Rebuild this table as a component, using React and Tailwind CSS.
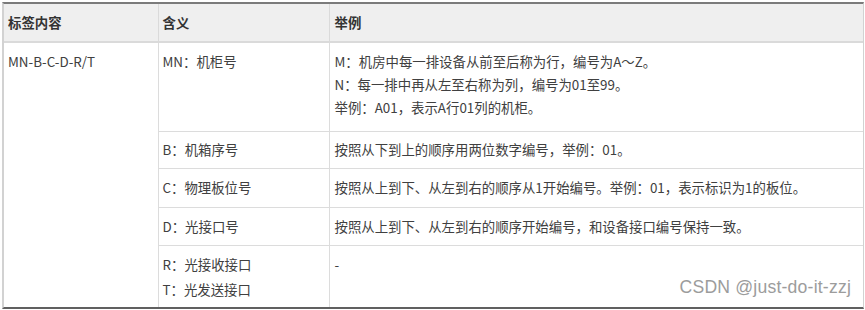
import React from 'react';

const rows = [
  { meaning: ['B：机箱序号'], example: ['按照从下到上的顺序用两位数字编号，举例：01。'], h: 'h-[37px]' },
  { meaning: ['C：物理板位号'], example: ['按照从上到下、从左到右的顺序从1开始编号。举例：01，表示标识为1的板位。'], h: 'h-[39px]' },
  { meaning: ['D：光接口号'], example: ['按照从上到下、从左到右的顺序开始编号，和设备接口编号保持一致。'], h: 'h-[38px]' },
];

export default function App() {
  return (
    <div className="relative w-[865px] h-[310px] bg-white pt-[2px] pl-[2px] pr-[1px] font-['Noto_Sans_CJK_SC','Noto_Sans',sans-serif] text-[13.4px] text-[#404040]">
      <div className="border-t-2 border-b-2 border-l-2 border-r border-t-[#7b7b7b] border-b-[#606060] border-l-[#d2d2d2] border-r-[#d2d2d2] h-[307px]">
        <table className="w-full table-fixed border-collapse">
          <colgroup>
            <col className="w-[154px]" />
            <col className="w-[171px]" />
            <col />
          </colgroup>
          <thead>
            <tr className="h-[38px] bg-[#efefef] border-b-2 border-[#dadada]">
              <th className="text-left font-bold text-[#333] pl-[4px] border-r border-[#dadada]">标签内容</th>
              <th className="text-left font-bold text-[#333] pl-[4px] border-r border-[#dadada]">含义</th>
              <th className="text-left font-bold text-[#333] pl-[5px]">举例</th>
            </tr>
          </thead>
          <tbody className="leading-[23px]">
            <tr className="h-[89px] border-b border-[#dcdcdc]">
              <td rowSpan={5} className="align-top pl-[4px] pt-[7px] border-r border-[#dcdcdc]">MN-B-C-D-R/T</td>
              <td className="align-top pl-[4px] pt-[7px] border-r border-[#dcdcdc]">MN：机柜号</td>
              <td className="align-top pl-[5px] pt-[7px]">
                <div>M：机房中每一排设备从前至后称为行，编号为A～Z。</div>
                <div>N：每一排中再从左至右称为列，编号为01至99。</div>
                <div>举例：A01，表示A行01列的机柜。</div>
              </td>
            </tr>
            {rows.map((r) => (
              <tr key={r.meaning[0]} className={`${r.h} border-b border-[#dcdcdc]`}>
                <td className="align-middle pl-[4px] border-r border-[#dcdcdc]">{r.meaning[0]}</td>
                <td className="align-middle pl-[5px]">{r.example[0]}</td>
              </tr>
            ))}
            <tr className="h-[62px]">
              <td className="align-top pl-[4px] pt-[6px] leading-[25px] border-r border-[#dcdcdc]">
                <div>R：光接收接口</div>
                <div>T：光发送接口</div>
              </td>
              <td className="align-top pl-[5px] pt-[6px] leading-[25px]">-</td>
            </tr>
          </tbody>
        </table>
      </div>
      {/* watermark */}
      <div className="absolute right-[14px] bottom-[10px] text-[17.6px] text-[#9c9c9c] font-['Liberation_Sans',sans-serif] tracking-[0.2px]">
        CSDN @just-do-it-zzj
      </div>
    </div>
  );
}
